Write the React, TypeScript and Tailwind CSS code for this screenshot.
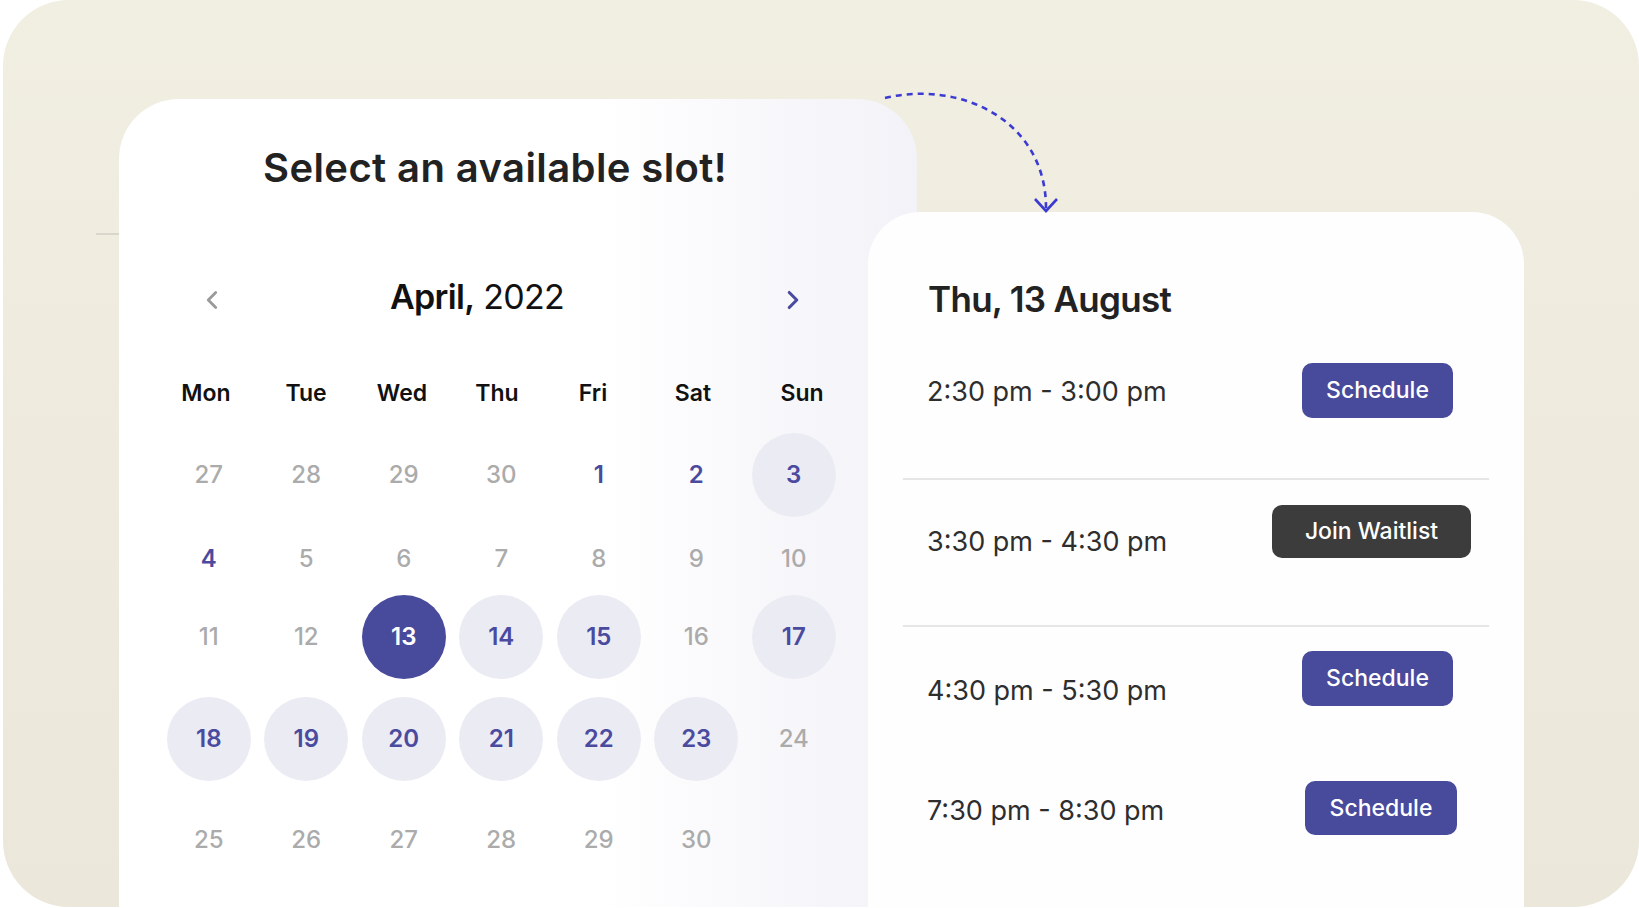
import { ChevronLeft, ChevronRight } from "lucide-react";

type DayState = "muted" | "avail" | "open" | "selected" | "empty";
type Day = { n: string; s: DayState };

const m = (n: number): Day => ({ n: String(n), s: "muted" });
const a = (n: number): Day => ({ n: String(n), s: "avail" });
const o = (n: number): Day => ({ n: String(n), s: "open" });

const weeks: { days: Day[]; cls: string }[] = [
    { days: [m(27), m(28), m(29), m(30), a(1), a(2), o(3)], cls: "h-[84px] mt-[25px]" },
    { days: [a(4), m(5), m(6), m(7), m(8), m(9), m(10)], cls: "h-[70px]" },
    { days: [m(11), m(12), { n: "13", s: "selected" }, o(14), o(15), m(16), o(17)], cls: "h-[84px] mt-[8px]" },
    { days: [o(18), o(19), o(20), o(21), o(22), o(23), m(24)], cls: "h-[84px] mt-[18px]" },
    { days: [m(25), m(26), m(27), m(28), m(29), m(30), { n: "", s: "empty" }], cls: "h-[84px] mt-[17px]" },
];

// header cells are not evenly spaced in the design
const weekdays = [
    { d: "Mon", w: "w-[88px]" },
    { d: "Tue", w: "w-[112px]" },
    { d: "Wed", w: "w-[80px]" },
    { d: "Thu", w: "w-[110px]" },
    { d: "Fri", w: "w-[82px]" },
    { d: "Sat", w: "w-[118px]" },
    { d: "Sun", w: "w-[100px]" },
];

const dayClass: Record<DayState, string> = {
    muted: "text-[#ababab]",
    avail: "text-[#4a4a9e] font-semibold",
    open: "bg-[#ebebf4] text-[#4a4a9e] font-semibold",
    selected: "bg-[#484a9b] text-white font-semibold",
    empty: "",
};

const slots = [
    { time: "2:30 pm - 3:00 pm", label: "Schedule", dark: false, row: "h-[159px] border-b-2", text: "mt-[53px]", btn: "mt-[42px] h-[55px] w-[151px] mr-[36px]" },
    { time: "3:30 pm - 4:30 pm", label: "Join Waitlist", dark: true, row: "h-[147px] border-b-2", text: "mt-[44px]", btn: "mt-[25px] h-[53px] w-[199px] mr-[18px]" },
    { time: "4:30 pm - 5:30 pm", label: "Schedule", dark: false, row: "h-[133px]", text: "mt-[46px]", btn: "mt-[24px] h-[55px] w-[151px] mr-[36px]" },
    { time: "7:30 pm - 8:30 pm", label: "Schedule", dark: false, row: "h-[120px]", text: "mt-[33px]", btn: "mt-[21px] h-[54px] w-[152px] mr-[32px]" },
];

const Calendar = () => {
    return (
        <div className="relative z-10 ml-[116px] mt-[99px] w-[798px] h-[900px] shrink-0 rounded-[60px] bg-linear-to-r from-white from-60% to-[#f2f2f8]">
            <h1 className="ml-[144px] mt-[46px] text-[40px] leading-[46px] font-semibold tracking-[0.01em] text-[#222]">
                Select an available slot!
            </h1>
            <div className="mt-[86px] flex items-center h-[40px]">
                <ChevronLeft className="ml-[78px] mt-[5px] w-[30px] h-[30px] text-[#9a9a9a]" strokeWidth={2.2} />
                <div className="ml-[163px] text-[34px] leading-[40px] text-[#111] tracking-[-0.02em]">
                    <span className="font-semibold">April,</span> <span>2022</span>
                </div>
                <ChevronRight className="ml-[214px] mt-[5px] w-[30px] h-[30px] text-[#4a4a9e]" strokeWidth={2.5} />
            </div>
            <div className="ml-[43px] mt-[61px] flex h-[30px] items-center">
                {weekdays.map((d) => (
                    <div key={d.d} className={`text-center text-[23px] font-semibold text-[#111] ${d.w}`}>{d.d}</div>
                ))}
            </div>
            {weeks.map((w, i) => (
                <div key={i} className={`ml-[41px] grid grid-cols-[repeat(7,97.5px)] items-center ${w.cls}`}>
                    {w.days.map((d, j) => (
                        <div key={j} className="flex justify-center">
                            <div className={`w-[84px] h-[84px] rounded-full flex items-center justify-center text-[24px] font-medium ${dayClass[d.s]}`}>
                                {d.n}
                            </div>
                        </div>
                    ))}
                </div>
            ))}
        </div>
    );
};

const Slots = () => {
    return (
        <div className="relative z-20 ml-[-49px] mt-[212px] w-[656px] h-[800px] shrink-0 rounded-[52px] bg-[#fefefe]">
            <h2 className="ml-[60px] mt-[65px] text-[35px] leading-[44px] font-semibold tracking-[-0.02em] text-[#222]">
                Thu, 13 August
            </h2>
            <div className="mx-[35px]">
                {slots.map((s) => (
                    <div key={s.time} className={`flex items-start justify-between border-[#e6e6e6] ${s.row}`}>
                        <div className={`pl-[24px] text-[27px] leading-[36px] text-[#2e2e2e] ${s.text}`}>{s.time}</div>
                        <button
                            className={`rounded-[10px] flex items-center justify-center text-[23px] font-medium text-white ${s.dark ? "bg-[#3c3c3c]" : "bg-[#484a9b]"} ${s.btn}`}
                        >
                            {s.label}
                        </button>
                    </div>
                ))}
            </div>
        </div>
    );
};

export default function App() {
    return (
        <div className="w-[1639px] h-[908px] bg-white overflow-hidden" style={{ fontFamily: "Inter, 'Noto Sans', sans-serif" }}>
            <div className="relative ml-[3px] w-[1636px] h-[907px] rounded-[66px] overflow-hidden bg-linear-to-b from-[#f1eee2] to-[#ebe7da] flex items-start">
                <div className="absolute left-[93px] top-[233px] w-[40px] h-[2px] bg-[#d9d6cb]" />
                <Calendar />
                <Slots />
                <svg className="absolute left-0 top-0 z-30 pointer-events-none" width="1636" height="907" viewBox="3 0 1636 907">
                    <path d="M885 98 C960 80 1046 120 1046 208" fill="none" stroke="#3b3bd2" strokeWidth="2.6" strokeDasharray="6 5" />
                    <path d="M1035 199 L1046 211 L1057 199" fill="none" stroke="#3b3bd2" strokeWidth="2.6" />
                </svg>
            </div>
        </div>
    );
}
